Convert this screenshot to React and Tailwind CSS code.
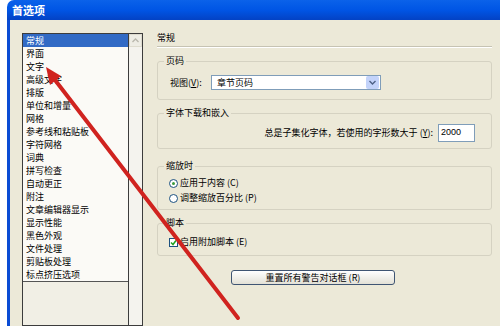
import React from "react";

const items = [
    "常规",
    "界面",
    "文字",
    "高级文字",
    "排版",
    "单位和增量",
    "网格",
    "参考线和粘贴板",
    "字符网格",
    "词典",
    "拼写检查",
    "自动更正",
    "附注",
    "文章编辑器显示",
    "显示性能",
    "黑色外观",
    "文件处理",
    "剪贴板处理",
    "标点挤压选项",
];

// group box: padding goes on the inner div so the legend stays near the left edge
const Group = ({ title, className = "", bodyClass = "", children }) => (
    <fieldset className={`border border-[#d5d2c2] rounded-[3px] ${className}`}>
        <legend className="ml-[6px] px-[2px] leading-[12px]">{title}</legend>
        <div className={bodyClass}>{children}</div>
    </fieldset>
);

const App = () => {
    return (
        <div className="relative w-[500px] h-[326px] overflow-hidden bg-white flex font-['Noto_Sans_CJK_SC',sans-serif] text-[9px] text-black">
            <div className="w-[7px] shrink-0 bg-white" />

            <div className="flex-1 flex flex-col min-w-0">
                {/* title bar */}
                <div className="h-[20px] shrink-0 rounded-tl-[7px] bg-gradient-to-b from-[#0b62ea] via-[#0055e5] to-[#0342c4] flex items-center pl-[5px] text-white font-bold text-[11px] leading-none">
                    首选项
                </div>

                <div className="flex-1 flex min-h-0 border-l-[3px] border-[#0a4cd4] bg-[#ece9d8]">
                    {/* LEFT: category list */}
                    <div className="shrink-0 pl-[12px] pt-[13px]">
                        <div className="w-[121px] h-full flex border border-[#3c3c3c] bg-[#f1efe5]">
                            <div className="w-[106px] border-r border-[#3c3c3c] flex flex-col">
                                <div className="bg-[#fbfaf6] border-b border-[#555]">
                                    {items.map((item, i) => (
                                        <div
                                            key={item}
                                            className={`h-[13px] pl-[3px] leading-[13px] whitespace-nowrap ${
                                                i === 0 ? "bg-[#316ac5] text-white" : ""
                                            }`}
                                        >
                                            {item}
                                        </div>
                                    ))}
                                </div>
                            </div>
                            {/* scrollbar */}
                            <div className="flex-1 bg-[#f4f3ee]">
                                <div className="h-[13px] bg-[#eeede5] border border-[#dedccf] flex items-center justify-center">
                                    <svg width="7" height="5" viewBox="0 0 7 5">
                                        <path d="M0.5 4 L3.5 1 L6.5 4" fill="none" stroke="#b9b7ad" strokeWidth="1.3" />
                                    </svg>
                                </div>
                            </div>
                        </div>
                    </div>

                    {/* RIGHT: settings */}
                    <div className="flex-1 ml-[14px] pr-[8px] pt-[12px] flex flex-col">
                        <div className="leading-[12px]">常规</div>
                        <div className="mt-[2px] border-t border-[#c6c3b3] border-b border-b-white" />

                        <Group title="页码" className="mt-[7px]" bodyClass="pl-[12px] pt-[8px] pb-[9px]">
                            <div className="flex items-center">
                                <span className="w-[41px] leading-[12px]">
                                    视图(<span className="underline">V</span>):
                                </span>
                                <div className="w-[170px] h-[15px] bg-white border border-[#7f9db9] flex items-center">
                                    <span className="flex-1 pl-[5px] leading-[12px]">章节页码</span>
                                    <div className="w-[13px] h-[13px] mr-[1px] rounded-[2px] bg-[#c3d3fa] flex items-center justify-center">
                                        <svg width="7" height="5" viewBox="0 0 7 5">
                                            <path d="M0.5 1 L3.5 4 L6.5 1" fill="none" stroke="#4d6185" strokeWidth="1.4" />
                                        </svg>
                                    </div>
                                </div>
                            </div>
                        </Group>

                        <Group title="字体下载和嵌入" className="mt-[7px]" bodyClass="pr-[16px] pt-[5px] pb-[6px]">
                            <div className="flex items-center justify-end gap-[5px]">
                                <span className="leading-[12px]">
                                    总是子集化字体，若使用的字形数大于 (<span className="underline">Y</span>):
                                </span>
                                <div className="w-[37px] h-[18px] bg-white border border-[#7f9db9] pl-[2px] flex items-center font-['Liberation_Sans',sans-serif] text-[9px]">
                                    2000
                                </div>
                            </div>
                        </Group>

                        <Group title="缩放时" className="mt-[11px]" bodyClass="pl-[11px] pt-[5px] pb-[5px]">
                            <div className="flex flex-col gap-[3px]">
                                <div className="flex items-center gap-[2px] h-[12px]">
                                    <span className="w-[9px] h-[9px] rounded-full border border-[#1c5180] bg-white flex items-center justify-center">
                                        <span className="w-[3px] h-[3px] rounded-full bg-[#3b9a3b]" />
                                    </span>
                                    <span className="leading-[12px]">应用于内容 (C)</span>
                                </div>
                                <div className="flex items-center gap-[2px] h-[12px]">
                                    <span className="w-[9px] h-[9px] rounded-full border border-[#1c5180] bg-white" />
                                    <span className="leading-[12px]">调整缩放百分比 (P)</span>
                                </div>
                            </div>
                        </Group>

                        <Group title="脚本" className="mt-[7px]" bodyClass="pl-[11px] pt-[7px] pb-[7px]">
                            <div className="flex items-center gap-[2px] h-[12px]">
                                <span className="w-[9px] h-[9px] border border-[#1c5180] bg-white flex items-center justify-center">
                                    <svg width="7" height="7" viewBox="0 0 7 7">
                                        <path d="M1 3.5 L3 5.5 L6 1.5" fill="none" stroke="#21a121" strokeWidth="1.5" />
                                    </svg>
                                </span>
                                <span className="leading-[12px]">启用附加脚本 (E)</span>
                            </div>
                        </Group>

                        <div className="mt-[14px] ml-[74px]">
                            <button className="w-[164px] h-[15px] rounded-[3px] border border-[#3f5573] bg-gradient-to-b from-white to-[#e3e1d6] text-[9px] leading-none flex items-center justify-center">
                                重置所有警告对话框 (R)
                            </button>
                        </div>
                    </div>
                </div>
            </div>

            {/* red annotation arrow */}
            <svg className="absolute inset-0 pointer-events-none" width="500" height="326" viewBox="0 0 500 326">
                <line x1="238" y1="318" x2="55" y2="80" stroke="#d0231f" strokeWidth="4" strokeLinecap="round" />
                <polygon points="46,67 61,76 50,85" fill="#d0231f" />
            </svg>
        </div>
    );
};

export default App;
